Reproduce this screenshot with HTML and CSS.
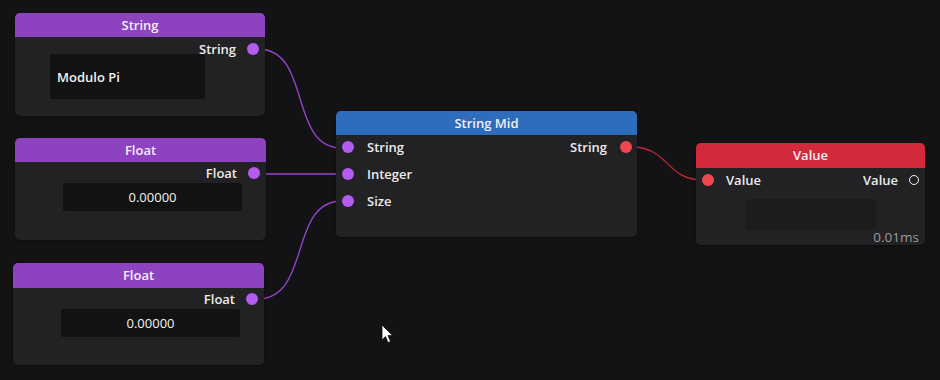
FILE: index.html
```html
<!DOCTYPE html>
<html>
<head>
<meta charset="utf-8">
<link rel="stylesheet" href="styles.css">
</head>
<body>
<div class="canvas">
  <svg class="wires" width="940" height="380" viewBox="0 0 940 380">
    <path class="wire purple" d="M258,49 C312,49 288,148 342,148"/>
    <path class="wire purple" d="M259,174 C300,174 300,174 342,174"/>
    <path class="wire purple" d="M257,299 C312,299 288,201 342,201"/>
    <path class="wire red" d="M631,147 C670,147 665,180 703,180"/>
  </svg>

  <div class="node n-string">
    <div class="header purple-h">String</div>
    <div class="row out h24">
      <span class="label">String</span><span class="dot pdot"></span>
    </div>
    <div class="textbox tb-string">Modulo Pi</div>
  </div>

  <div class="node n-float1">
    <div class="header purple-h">Float</div>
    <div class="row out h22">
      <span class="label">Float</span><span class="dot pdot"></span>
    </div>
    <div class="textbox tb-float">0.00000</div>
  </div>

  <div class="node n-float2">
    <div class="header purple-h">Float</div>
    <div class="row out h22">
      <span class="label">Float</span><span class="dot pdot"></span>
    </div>
    <div class="textbox tb-float">0.00000</div>
  </div>

  <div class="node n-mid">
    <div class="header blue-h">String Mid</div>
    <div class="ports">
      <div class="row both">
        <div class="in"><span class="dot pdot"></span><span class="label">String</span></div>
        <div class="outp"><span class="label">String</span><span class="dot rdot"></span></div>
      </div>
      <div class="row both">
        <div class="in"><span class="dot pdot"></span><span class="label">Integer</span></div>
      </div>
      <div class="row both">
        <div class="in"><span class="dot pdot"></span><span class="label">Size</span></div>
      </div>
    </div>
  </div>

  <div class="node n-value">
    <div class="header red-h">Value</div>
    <div class="row both vrow">
      <div class="in"><span class="dot rdot"></span><span class="label">Value</span></div>
      <div class="outp"><span class="label">Value</span><span class="ring"></span></div>
    </div>
    <div class="valbox"></div>
    <div class="timing">0.01ms</div>
  </div>

  <svg class="cursor" width="14" height="20" viewBox="0 0 14 20">
    <path d="M1,1 L1,16 L4.5,12.5 L7,18.5 L9.5,17.5 L7,11.5 L11.5,11.5 Z" fill="#ffffff" stroke="#1a1a1a" stroke-width="0.8"/>
  </svg>
</div>
</body>
</html>
```

FILE: styles.css
```css
html, body {
  margin: 0;
  padding: 0;
  background: #131315;
}
.canvas {
  position: relative;
  width: 940px;
  height: 380px;
  overflow: hidden;
  background: #131315;
  font-family: "Open Sans", "Noto Sans", sans-serif;
  font-size: 13px;
  font-weight: 600;
  color: #ececec;
}
.wires {
  position: absolute;
  left: 0;
  top: 0;
}
.wire {
  fill: none;
  stroke-width: 1.3;
}
.wire.purple { stroke: #9a45d0; }
.wire.red { stroke: #c22837; }

.node {
  position: absolute;
  background: #222224;
  border-radius: 5px;
  overflow: hidden;
  box-shadow: 0 1px 3px rgba(0,0,0,0.35);
}
.header {
  height: 24px;
  line-height: 24px;
  text-align: center;
  color: #f3eef6;
  font-weight: 600;
  font-size: 13px;
}
.purple-h { background: #8d43c0; }
.blue-h { background: #2e6cbc; }
.red-h { background: #d32a3b; height: 25px; line-height: 25px; }

.n-string { left: 15px; top: 13px; width: 250px; height: 103px; }
.n-float1 { left: 15px; top: 138px; width: 251px; height: 102px; }
.n-float2 { left: 13px; top: 263px; width: 251px; height: 102px; }
.n-float2 .header { height: 25px; line-height: 25px; }
.n-mid { left: 336px; top: 111px; width: 301px; height: 126px; }
.n-value { left: 696px; top: 143px; width: 229px; height: 102px; }

.row {
  display: flex;
  align-items: center;
}
.row.out {
  justify-content: flex-end;
  padding-right: 6px;
  gap: 11px;
}
.h24 { height: 24px; }
.h22 { height: 22px; }

.dot {
  width: 12px;
  height: 12px;
  border-radius: 50%;
  flex: none;
}
.pdot { background: #b35cef; }
.rdot { background: #f0464f; }
.ring {
  width: 8px;
  height: 8px;
  border-radius: 50%;
  border: 1.8px solid #f2f2f2;
  flex: none;
}

.textbox {
  background: #121212;
  border-radius: 2px;
  color: #f2f2f2;
}
.tb-string {
  margin: -7px 0 0 35px;
  width: 148px;
  height: 45px;
  line-height: 47px;
  padding-left: 7px;
}
.tb-float {
  margin: -1px 0 0 48px;
  width: 179px;
  height: 28px;
  line-height: 29px;
  text-align: center;
  font-weight: 500;
}

.ports { margin-top: -1px; }
.row.both {
  height: 26px;
  justify-content: space-between;
  padding: 0 5px 0 6px;
}
.row.both:nth-child(2) { height: 27px; }
.row.both:nth-child(3) { height: 27px; }
.in, .outp {
  display: flex;
  align-items: center;
  gap: 13px;
}
.vrow {
  height: 24px !important;
  padding: 0 6px 0 6px !important;
}
.vrow .in { gap: 12px; }
.vrow .outp { gap: 11px; }

.valbox {
  margin: 7px 0 0 50px;
  width: 130px;
  height: 31px;
  background: #1d1c1a;
  border-radius: 2px;
}
.timing {
  text-align: right;
  padding-right: 6px;
  margin-top: -2px;
  color: #9b9b9b;
  font-weight: 500;
  font-size: 13.5px;
  line-height: 18px;
}

.cursor {
  position: absolute;
  left: 381px;
  top: 324px;
}
```
